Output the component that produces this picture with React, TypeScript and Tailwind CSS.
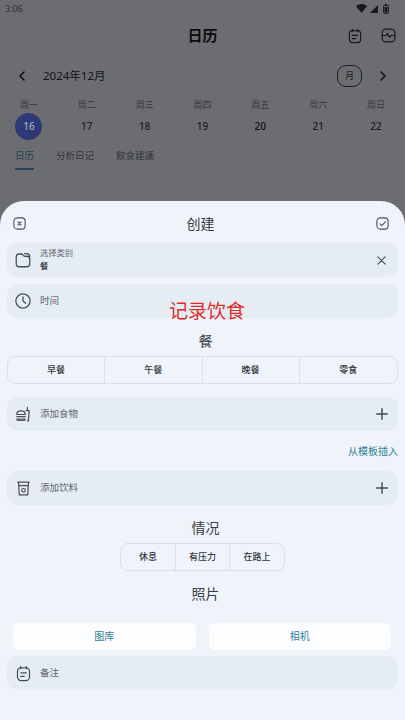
import React from "react";

const days = [
  ["周一", "16"],
  ["周二", "17"],
  ["周三", "18"],
  ["周四", "19"],
  ["周五", "20"],
  ["周六", "21"],
  ["周日", "22"],
];

function Svg({ size, children, className }: { size: number; children: React.ReactNode; className?: string }) {
  return (
    <svg
      width={size}
      height={size}
      viewBox="0 0 24 24"
      fill="none"
      stroke="currentColor"
      strokeWidth={1.7}
      strokeLinecap="round"
      strokeLinejoin="round"
      className={className}
    >
      {children}
    </svg>
  );
}

const NoteIcon = ({ size = 17 }: { size?: number }) => (
  <Svg size={size}>
    <rect x="3.5" y="4" width="17" height="18" rx="5" />
    <path d="M8 2v3M16 2v3M8 11h8M8 16h5" />
  </Svg>
);

const PlusIcon = () => (
  <Svg size={14} className="-mr-[2px]">
    <path d="M12 3v18M3 12h18" strokeWidth={2.4} />
  </Svg>
);

function Row({
  icon,
  label,
  action,
  children,
}: {
  icon: React.ReactNode;
  label?: string;
  action?: React.ReactNode;
  children?: React.ReactNode;
}) {
  return (
    <div className="mx-[7px] flex h-[34px] items-center rounded-[10px] bg-[#e5ecf3] pl-[4px] pr-[11px]">
      <div className="flex w-[24px] justify-center text-[#4a4f55]">{icon}</div>
      <div className="ml-[5px] flex-1">
        {children ?? <span className="block text-[9.5px] leading-[14px] text-[#62676d]">{label}</span>}
      </div>
      {action && <div className="text-[#43484e]">{action}</div>}
    </div>
  );
}

export default function App() {
  return (
    <div className="relative flex h-[720px] w-full flex-col overflow-hidden bg-[#6c6d70] font-['Noto_Sans','Noto_Sans_CJK_SC',sans-serif]">
      {/* Calendar behind the sheet */}
      <div className="h-[201px] shrink-0">
        <div className="flex h-[16px] items-center justify-between pl-[5px] pr-[16px] pt-[1px]">
          <span className="text-[9px] text-[#2e2f31]">3:06</span>
          <div className="flex items-center gap-[3px] text-[#18191b]">
            <svg width="11" height="9" viewBox="0 0 11 9" fill="currentColor">
              <path d="M0 2.2C3-.6 8-.6 11 2.2L5.5 9z" />
            </svg>
            <svg width="8" height="8" viewBox="0 0 8 8" fill="currentColor">
              <path d="M8 0v8H0z" />
            </svg>
            <svg width="6" height="10" viewBox="0 0 6 10" className="ml-[2px]">
              <rect x="0.6" y="1.2" width="4.8" height="8.2" rx="1" fill="none" stroke="currentColor" />
              <rect x="2" y="0" width="2" height="1.5" fill="currentColor" />
              <rect x="1.5" y="3" width="3" height="5.5" fill="currentColor" />
            </svg>
          </div>
        </div>
        <div className="relative mt-[5px] flex h-[28px] items-center justify-center">
          <span className="text-[15px] font-bold text-[#0c0c0d]">日历</span>
          <div className="absolute right-[8px] top-[6px] flex items-center gap-[17px] text-[#17181a]">
            <NoteIcon size={16} />
            <Svg size={17}>
              <rect x="3" y="3" width="18" height="18" rx="5.5" />
              <path d="M3 12h5.5l2-3 3 5.5 2-2.5H21" />
            </Svg>
          </div>
        </div>
        <div className="mt-[11px] flex h-[32px] items-center pl-[16px] pr-[16px]">
          <Svg size={12} className="text-[#0f1012]">
            <path d="M16 4l-8 8 8 8" strokeWidth={3.2} />
          </Svg>
          <span className="ml-[15px] flex-1 text-[11.5px] text-[#141517]">2024年12月</span>
          <div className="flex h-[22px] w-[25px] items-center justify-center rounded-[9px] border border-[#1d1e20] text-[9px] text-[#1d1e20]">
            月
          </div>
          <Svg size={12} className="ml-[15px] text-[#0f1012]">
            <path d="M8 4l8 8-8 8" strokeWidth={3.2} />
          </Svg>
        </div>
        <div className="mt-[5px] grid grid-cols-7">
          {days.map(([w, d], i) => (
            <div key={w} className="flex flex-col items-center">
              <span className="text-[9px] leading-[16px] text-[#37383b]">{w}</span>
              <div
                className={`flex h-[27px] w-[27px] items-center justify-center rounded-full text-[10px] font-medium ${
                  i === 0 ? "bg-[#2e3a78] text-[#a4a8c4]" : i === 4 ? "text-[#0e0f10]" : "text-[#1c1d1f]"
                }`}
              >
                {d}
              </div>
            </div>
          ))}
        </div>
        <div className="mt-[8px] flex pl-[15px] text-[9.5px] text-[#34363a]">
          <div className="flex flex-col">
            <span className="leading-[16px] text-[#1f4254]">日历</span>
            <div className="mt-[4px] h-[2px] rounded-full bg-[#1d4557]" />
          </div>
          <span className="ml-[22px] leading-[16px]">分析日记</span>
          <span className="ml-[22px] leading-[16px]">飲食建議</span>
        </div>
      </div>

      {/* Bottom sheet */}
      <div className="flex flex-1 flex-col rounded-t-[24px] bg-[#eff4fb]">
        <div className="flex h-[42px] items-center justify-between pl-[12px] pr-[15px] pt-[3px] text-[#4a4f55]">
          <Svg size={15}>
            <rect x="3" y="3" width="18" height="18" rx="5.5" />
            <path d="M9.5 9.5l5 5M14.5 9.5l-5 5" />
          </Svg>
          <span className="mr-[1px] text-[14px] text-[#33373c]">创建</span>
          <Svg size={15}>
            <rect x="3" y="3" width="18" height="18" rx="5.5" />
            <path d="M8 12.5l3 3 5.5-6" />
          </Svg>
        </div>
        <Row
          icon={
            <Svg size={18}>
              <path d="M3 8a4 4 0 014-4h2.5c1 0 1.7.4 2.3 1.2l.5.8c.5.7 1.2 1 2 1H17a4 4 0 014 4v6a4 4 0 01-4 4H7a4 4 0 01-4-4z" />
              <path d="M14 3.5h3a4 4 0 014 4" />
            </Svg>
          }
          action={
            <Svg size={11}>
              <path d="M4 4l16 16M20 4L4 20" strokeWidth={2.4} />
            </Svg>
          }
        >
          <div className="flex flex-col pb-[2px]">
            <span className="text-[8.25px] leading-[13px] text-[#62676d]">选择类别</span>
            <span className="text-[8.25px] font-medium leading-[13px] text-[#2a2d31]">餐</span>
          </div>
        </Row>
        <div className="mt-[7px]">
          <Row
            label="时间"
            icon={
              <Svg size={18}>
                <circle cx="12" cy="12" r="9.5" />
                <path d="M12 6.5V12l3.5 3" />
              </Svg>
            }
          />
        </div>

        <div className="mt-[13px] pl-[6px] text-center text-[14px] leading-[20px] text-[#3a3e43]">餐</div>
        <div className="mx-[7px] mt-[5px] grid h-[28px] grid-cols-4 divide-x divide-[#d9e0e8] rounded-[8px] border border-[#d9e0e8] text-[9px] font-medium text-[#33373c]">
          {["早餐", "午餐", "晚餐", "零食"].map((m) => (
            <div key={m} className="flex items-center justify-center">
              {m}
            </div>
          ))}
        </div>

        <div className="mt-[13px]">
          <Row
            label="添加食物"
            action={<PlusIcon />}
            icon={
              <Svg size={17}>
                <path d="M2.5 12c0-3 2.7-5 6-5s6 2 6 5zM2.5 15h12M2.5 18.5c0 1.5 1 2 2 2h8c1 0 2-.5 2-2z" />
                <path d="M15.5 6.5H20L19 21h-1.5M17.5 6.5V2" />
              </Svg>
            }
          />
        </div>
        <div className="mt-[12px] h-[16px] pr-[7px] text-right text-[10px] leading-[16px] text-[#2f7f95]">从模板插入</div>
        <div className="mt-[12px]">
          <Row
            label="添加饮料"
            action={<PlusIcon />}
            icon={
              <Svg size={17}>
                <path d="M4 3h16M5 3l1 18h12l1-18M5.5 8h13" />
                <circle cx="12" cy="14.5" r="2.5" />
              </Svg>
            }
          />
        </div>

        <div className="mt-[13px] pl-[6px] text-center text-[14px] leading-[20px] text-[#3a3e43]">情况</div>
        <div className="mx-auto mt-[5px] flex h-[28px] w-[165px] divide-x divide-[#d9e0e8] rounded-[8px] border border-[#d9e0e8] text-[9px] font-medium text-[#33373c]">
          <div className="flex w-[55px] items-center justify-center">休息</div>
          <div className="flex w-[54px] items-center justify-center">有压力</div>
          <div className="flex flex-1 items-center justify-center">在路上</div>
        </div>

        <div className="mt-[13px] pl-[6px] text-center text-[14px] leading-[20px] text-[#3a3e43]">照片</div>
        <div className="mt-[19px] flex gap-[13px] pl-[13px] pr-[14px]">
          <div className="flex h-[27px] flex-1 items-center justify-center rounded-[6px] bg-[#fbfdff] text-[10px] text-[#2f7f95]">图库</div>
          <div className="flex h-[27px] flex-1 items-center justify-center rounded-[6px] bg-[#fbfdff] text-[10px] text-[#2f7f95]">相机</div>
        </div>
        <div className="mt-[6px]">
          <Row label="备注" icon={<NoteIcon size={17} />} />
        </div>
      </div>

      {/* Caption laid over the screenshot */}
      <div className="absolute left-[169px] top-[297px] text-[19px] leading-[28px] text-[#e02b2b]">记录饮食</div>
    </div>
  );
}
